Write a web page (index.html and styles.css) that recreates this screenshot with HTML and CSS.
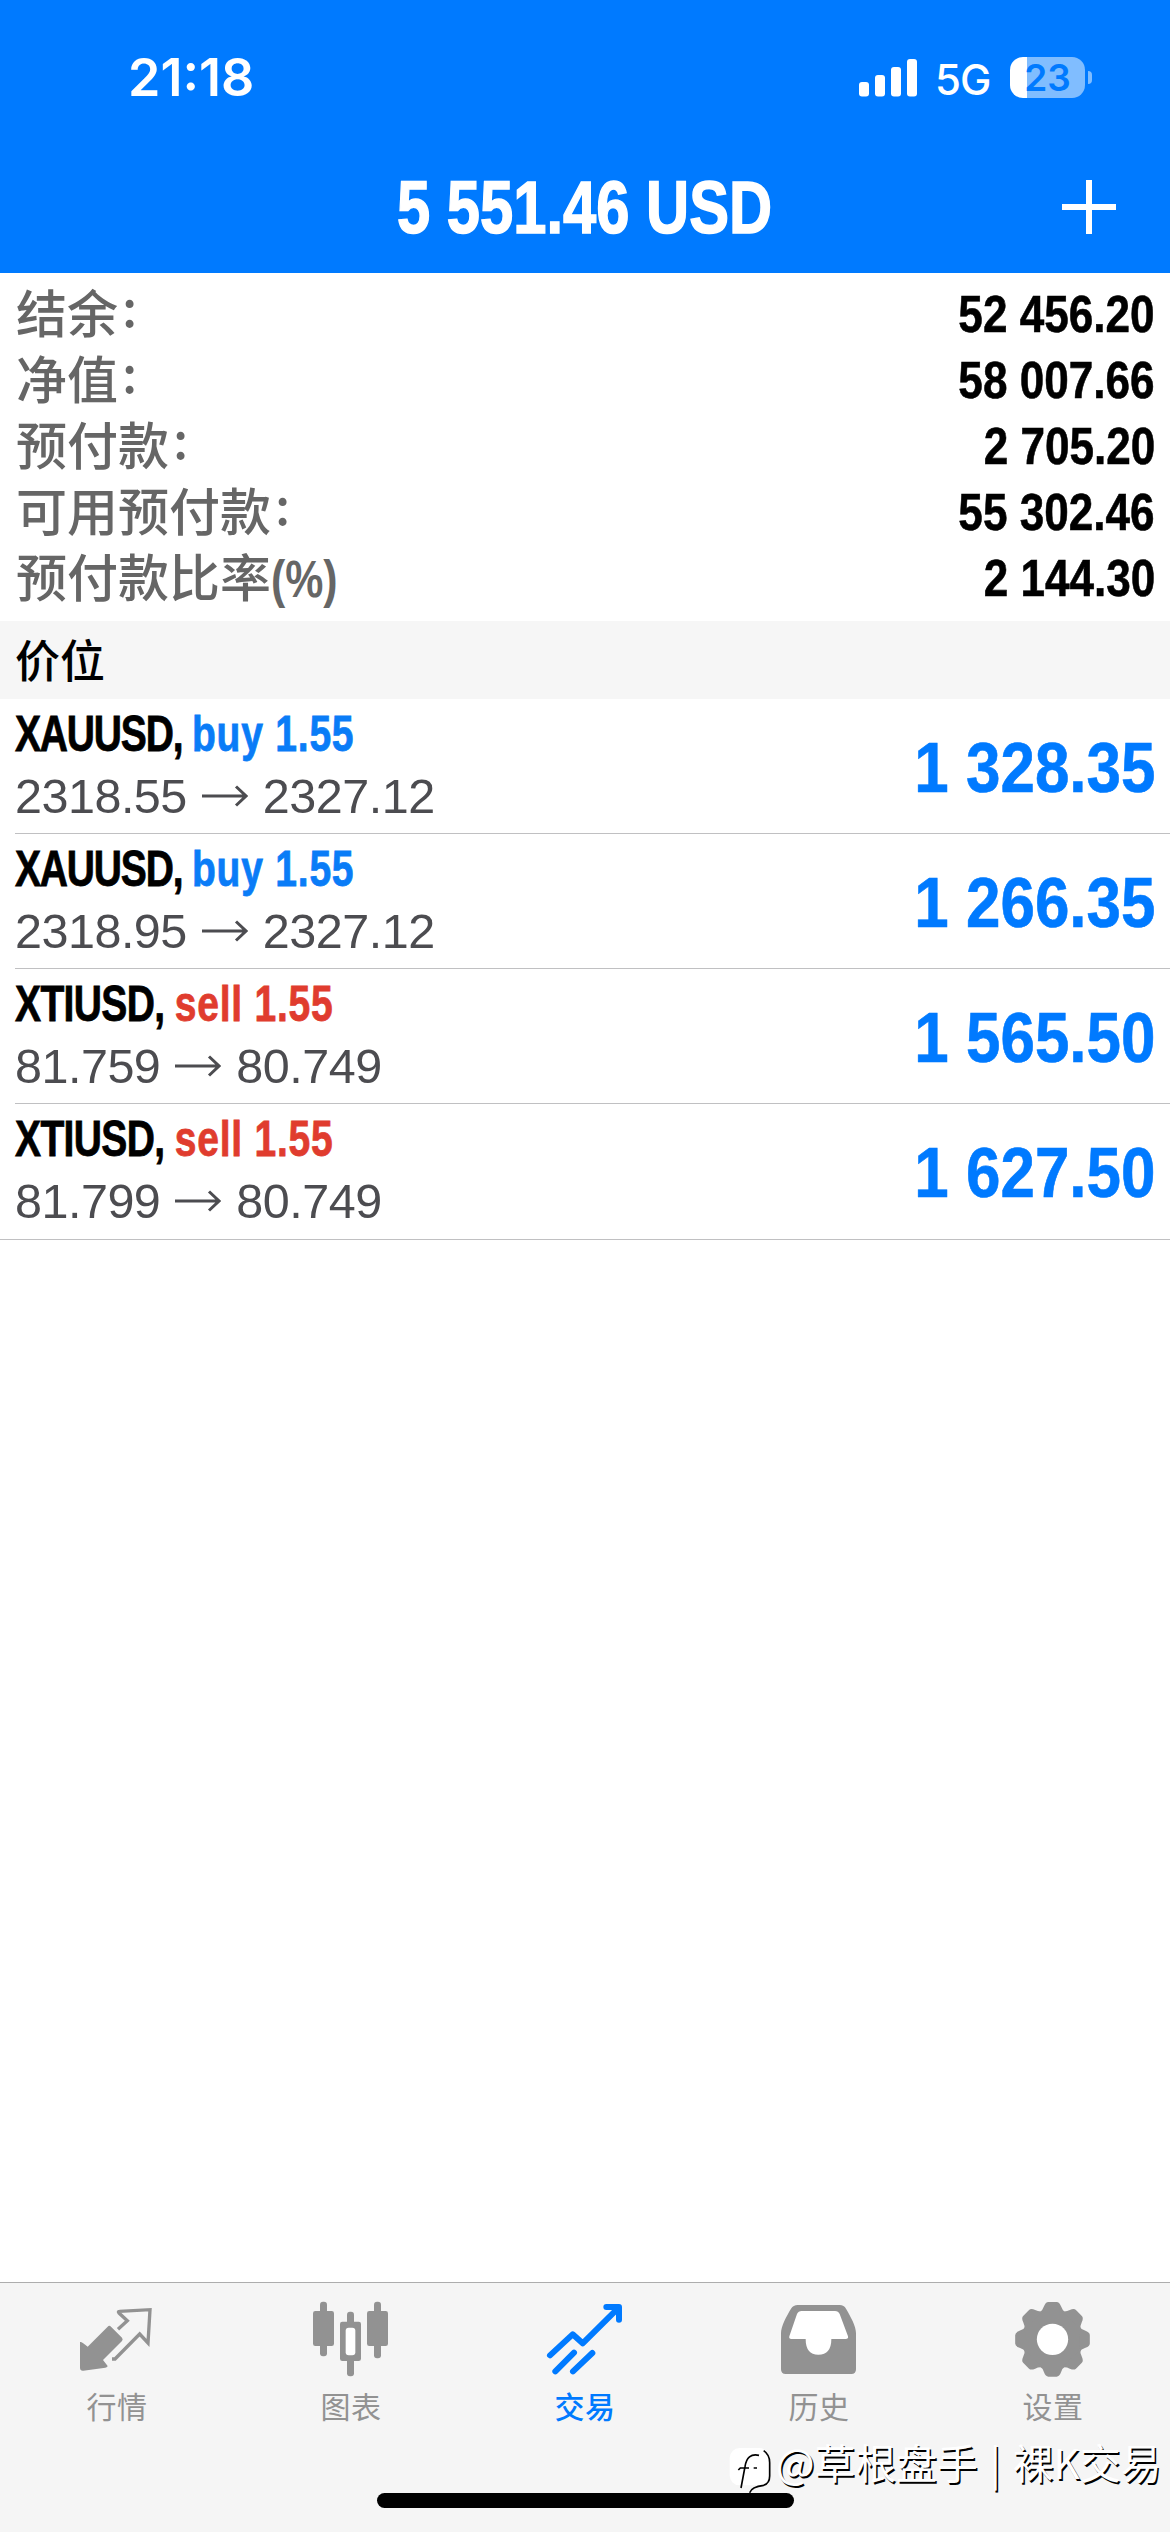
FILE: index.html
```html
<!DOCTYPE html>
<html lang="zh-CN">
<head>
<meta charset="utf-8">
<title>交易</title>
<link rel="stylesheet" href="styles.css">
</head>
<body>
<div class="screen">
  <header class="header">
    <div class="status">
      <span class="time">21:18</span>
      <div class="status-right">
        <svg class="signal" width="58" height="38" viewBox="0 0 58 38" fill="#fff">
          <rect x="0" y="23" width="10" height="14.500" rx="3"/>
          <rect x="16" y="16" width="10" height="21.500" rx="3"/>
          <rect x="32" y="8" width="10" height="29.500" rx="3"/>
          <rect x="48" y="0" width="10" height="37.500" rx="3"/>
        </svg>
        <span class="network">5G</span>
        <div class="battery"><span class="level">23</span></div>
        <span class="nub"></span>
      </div>
    </div>
    <div class="titlebar">
      <h1 class="title">5 551.46 USD</h1>
      <svg class="plus" width="54" height="54" viewBox="0 0 54 54" fill="#fff"><path d="M24 0h6v24h24v6H30v24h-6V30H0v-6h24z"/></svg>
    </div>
  </header>

  <section class="summary">
    <div class="line"><span class="label">结余<i class="colon">:</i></span><span class="value">52 456.20</span></div>
    <div class="line"><span class="label">净值<i class="colon">:</i></span><span class="value">58 007.66</span></div>
    <div class="line"><span class="label">预付款<i class="colon">:</i></span><span class="value">2 705.20</span></div>
    <div class="line"><span class="label">可用预付款<i class="colon">:</i></span><span class="value">55 302.46</span></div>
    <div class="line"><span class="label">预付款比率<i class="pct">(%)</i></span><span class="value">2 144.30</span></div>
  </section>

  <h2 class="section">价位</h2>

  <ul class="positions">
    <li class="position">
      <div class="info">
        <div class="symbol">XAUUSD, <span class="buy">buy 1.55</span></div>
        <div class="prices"><span>2318.55</span><svg class="arrow" width="46" height="22" viewBox="0 0 46 22"><path d="M0 11H44M34 1.500L44 11L34 20.500"/></svg><span>2327.12</span></div>
      </div>
      <div class="profit">1 328.35</div>
    </li>
    <li class="position">
      <div class="info">
        <div class="symbol">XAUUSD, <span class="buy">buy 1.55</span></div>
        <div class="prices"><span>2318.95</span><svg class="arrow" width="46" height="22" viewBox="0 0 46 22"><path d="M0 11H44M34 1.500L44 11L34 20.500"/></svg><span>2327.12</span></div>
      </div>
      <div class="profit">1 266.35</div>
    </li>
    <li class="position">
      <div class="info">
        <div class="symbol oil">XTIUSD, <span class="sell">sell 1.55</span></div>
        <div class="prices"><span>81.759</span><svg class="arrow" width="46" height="22" viewBox="0 0 46 22"><path d="M0 11H44M34 1.500L44 11L34 20.500"/></svg><span>80.749</span></div>
      </div>
      <div class="profit">1 565.50</div>
    </li>
    <li class="position last">
      <div class="info">
        <div class="symbol oil">XTIUSD, <span class="sell">sell 1.55</span></div>
        <div class="prices"><span>81.799</span><svg class="arrow" width="46" height="22" viewBox="0 0 46 22"><path d="M0 11H44M34 1.500L44 11L34 20.500"/></svg><span>80.749</span></div>
      </div>
      <div class="profit">1 627.50</div>
    </li>
  </ul>

  <nav class="tabs">
    <a class="tab">
      <svg class="icon" viewBox="111 90 240 240">
        <path fill="currentColor" d="M120 216Q125 214 143 230L203 170Q208 165 213 170L246 203Q250 208 246 213L189 270L203 288Q203 292 196 293L130 302Q120 303 120 293z"/>
        <path fill="none" stroke="currentColor" stroke-width="10" d="M234 178L262 152L237 129Q233 124 238 124L330 119L324 219L299 192L225 267H216"/>
      </svg>
      <span>行情</span>
    </a>
    <a class="tab">
      <svg class="icon" viewBox="813 90 240 240" fill="currentColor">
        <rect x="840" y="95" width="21" height="164" rx="9"/>
        <rect x="819" y="123" width="63" height="105" rx="7"/>
        <rect x="1002" y="95" width="21" height="170" rx="9"/>
        <rect x="981" y="123" width="63" height="105" rx="7"/>
        <rect x="921" y="125" width="21" height="194" rx="9"/>
        <rect x="900" y="155" width="63" height="118" rx="7"/>
        <rect x="917" y="173" width="29" height="83" rx="9" fill="#fff"/>
      </svg>
      <span>图表</span>
    </a>
    <a class="tab active">
      <svg class="icon" viewBox="135 90 240 240" fill="none" stroke="currentColor" stroke-width="18" stroke-linecap="round" stroke-linejoin="round">
        <path d="M150 256L218 193L248 220L350 119"/>
        <path d="M319 111H357V149"/>
        <path d="M166 304L222 248M219 304L277 249"/>
      </svg>
      <span>交易</span>
    </a>
    <a class="tab">
      <svg class="icon" viewBox="837 90 240 240">
        <path fill="currentColor" d="M893 105H1019Q1032 105 1038 116C1052 140 1068 168 1068 190V298Q1068 312 1054 312H857Q843 312 843 298V190C843 168 860 138 873 116Q880 105 893 105z"/>
        <path fill="#fff" d="M905 123H1005Q1015 123 1019 132L1044 199Q1046 207 1037 207H994Q994 254 955 254Q917 254 917 207H874Q866 207 868 199L891 132Q895 123 905 123z"/>
      </svg>
      <span>历史</span>
    </a>
    <a class="tab">
      <svg class="icon" viewBox="159 90 240 240">
        <g fill="currentColor">
          <circle cx="277.500" cy="208" r="88"/>
          <path id="tooth" d="M238 128Q248 122 252 109Q257 96 265 96H290Q298 96 303 109Q307 122 317 128z"/>
          <use href="#tooth" transform="rotate(45 277.500 208)"/>
          <use href="#tooth" transform="rotate(90 277.500 208)"/>
          <use href="#tooth" transform="rotate(135 277.500 208)"/>
          <use href="#tooth" transform="rotate(180 277.500 208)"/>
          <use href="#tooth" transform="rotate(225 277.500 208)"/>
          <use href="#tooth" transform="rotate(270 277.500 208)"/>
          <use href="#tooth" transform="rotate(315 277.500 208)"/>
        </g>
        <circle cx="277.500" cy="208" r="47" fill="#fff"/>
      </svg>
      <span>设置</span>
    </a>
  </nav>

  <div class="home-indicator"></div>
  <div class="watermark">
    <svg width="44" height="50" viewBox="0 0 132 150">
      <rect x="2" y="6" width="118" height="112" rx="30" fill="#fff"/>
      <path d="M104 14Q122 26 122 50V90Q122 112 104 118Q68 122 62 140" fill="none" stroke="#000" stroke-width="5"/>
      <path d="M90 28Q54 20 48 62L36 126M28 72L34 66H60M74 66H84" fill="none" stroke="#000" stroke-width="5"/>
    </svg>
    <span>@草根盘手<b class="bar">|</b>裸K交易</span>
  </div>
</div>
</body>
</html>
```
FILE: styles.css
```css
* { box-sizing: border-box; margin: 0; padding: 0; }
body {
  background: #fff;
  font-family: "Liberation Sans", "Noto Sans CJK SC", sans-serif;
}
.screen {
  position: relative;
  width: 1170px;
  height: 2532px;
  display: flex;
  flex-direction: column;
  overflow: hidden;
}

/* Header */
.header {
  height: 273px;
  background: #007aff;
  color: #fff;
}
.status {
  height: 140px;
  padding: 0 78px 0 128px;
  display: flex;
  justify-content: space-between;
  align-items: flex-start;
  font-family: Inter, sans-serif;
}
.time {
  margin-top: 47px;
  font-size: 52px;
  line-height: 62px;
  font-weight: 600;
}
.status-right { display: flex; margin-top: 57px; }
.signal { margin-top: 2px; }
.network {
  width: 54px;
  margin: 0 21px 0 18px;
  font-size: 42px;
  line-height: 45px;
  font-weight: 500;
  letter-spacing: -1px;
}
.battery {
  width: 75px;
  height: 41px;
  border-radius: 13px;
  background: linear-gradient(90deg, #fff 17px, #80bdff 17px);
  text-align: center;
  color: #007aff;
}
.level { font-size: 37px; line-height: 42px; font-weight: 600; }
.nub {
  width: 4px;
  height: 13px;
  margin: 14px 0 0 3px;
  border-radius: 0 4px 4px 0;
  background: #80bdff;
}
.titlebar {
  display: grid;
  grid-template-columns: 1fr auto 1fr;
  padding-right: 54px;
  padding-left: 54px;
  align-items: center;
  height: 133px;
}
.title {
  grid-column: 2;
  font: bold 75px/84px "Liberation Sans", sans-serif;
  white-space: nowrap;
  -webkit-text-stroke: 1.500px currentColor;
  transform: scaleX(0.796);
}
.plus { justify-self: end; }

/* Account summary */
.summary {
  height: 348px;
  padding: 8px 15px 0 16px;
}
.line {
  display: flex;
  justify-content: space-between;
  height: 66px;
}
.label {
  font: 500 51px/60px "Noto Sans CJK SC", sans-serif;
  color: #666;
}
.colon {
  display: inline-block;
  margin-left: 4px;
  font-style: normal;
  transform: translateY(-6px);
}
.pct {
  display: inline-block;
  font: bold 51px/60px "Liberation Sans", sans-serif;
  transform: scaleX(0.84);
  transform-origin: left center;
}
.value {
  font: bold 52.500px/66px "Liberation Sans", sans-serif;
  color: #000;
  -webkit-text-stroke: 0.600px currentColor;
  transform: scaleX(0.84);
  transform-origin: right center;
}

/* Open positions */
.section {
  height: 78px;
  padding-left: 15px;
  background: #f6f6f6;
  font: 500 45px/75px "Noto Sans CJK SC", sans-serif;
}
.positions { list-style: none; flex: 1; }
.position {
  height: 135px;
  margin-left: 15px;
  padding-right: 15px;
  border-bottom: 1px solid #c0c0c2;
  display: flex;
  justify-content: space-between;
}
.position.last {
  height: 136px;
  margin-left: 0;
  padding-left: 15px;
}
.symbol {
  width: max-content;
  margin-top: 6px;
  font: bold 50px/58px "Liberation Sans", sans-serif;
  letter-spacing: -1.500px;
  -webkit-text-stroke: 0.800px currentColor;
  transform: scaleX(0.78);
  transform-origin: left center;
}
.symbol.oil { letter-spacing: -0.800px; }
.buy, .sell { letter-spacing: 1px; }
.buy { color: #0a7cf7; }
.sell { color: #e03c2e; }
.prices {
  display: flex;
  align-items: center;
  width: max-content;
  height: 66px;
  font-size: 48.500px;
  letter-spacing: -0.500px;
  color: #4c4c50;
}
.arrow {
  margin: 0 15px;
  fill: none;
  stroke: #4c4c50;
  stroke-width: 3;
}
.profit {
  font-size: 70px;
  font-weight: bold;
  line-height: 138px;
  color: #007aff;
  -webkit-text-stroke: 0.600px currentColor;
  transform: scaleX(0.885);
  transform-origin: right center;
}

/* Tab bar */
.tabs {
  height: 250px;
  border-top: 1px solid #adadad;
  background: #f5f5f5;
  display: grid;
  grid-template-columns: repeat(5, 1fr);
}
.tab {
  display: flex;
  flex-direction: column;
  align-items: center;
  padding-top: 17px;
  color: #929292;
  font: 30px/44px "Noto Sans CJK SC", sans-serif;
  letter-spacing: 0.500px;
}
.tab span { margin-top: 3px; }
.tab.active { color: #007aff; font-weight: 500; }
.icon { width: 80px; height: 80px; }

.home-indicator {
  position: absolute;
  left: 377px;
  top: 2493px;
  width: 417px;
  height: 15px;
  border-radius: 8px;
  background: #000;
}
.watermark {
  position: absolute;
  left: 729px;
  top: 2437px;
  display: flex;
  align-items: flex-start;
  white-space: nowrap;
  font: 400 40.800px/50px "Noto Sans CJK SC", sans-serif;
  color: #fff;
  text-shadow: 1.500px 1.500px 0 #000;
}
.watermark svg { margin: 9px 3px 0 0; }
.bar { margin: 0 12px; font-weight: 400; }
```
